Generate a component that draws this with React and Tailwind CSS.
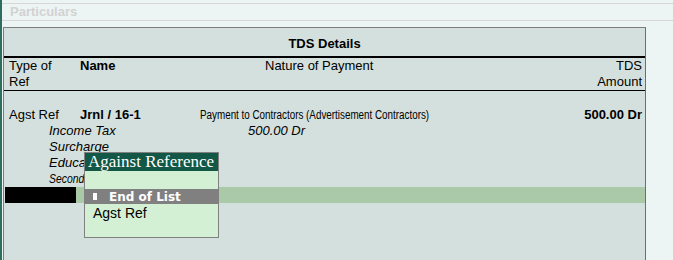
import React from "react";

const sans = "font-['Liberation_Sans',Arial,sans-serif]";

// condensed text: no narrow face installed, so squeeze Liberation Sans
const Narrow = ({ children, className = "text-[12px] scale-x-[0.82]" }) => (
    <span className={`inline-block origin-left whitespace-nowrap ${className}`}>{children}</span>
);

const TaxLine = ({ label, amount, narrow }) => (
    <div className="h-[16px] flex items-center pl-[45px] italic text-[13px] leading-[16px]">
        <div className="w-[199px] whitespace-nowrap">
            {narrow ? <Narrow className="text-[13px] scale-x-[0.8]">{label}</Narrow> : label}
        </div>
        {amount && <div>{amount}</div>}
    </div>
);

const Popup = () => (
    <div className="absolute left-[82px] top-[152px] w-[135px] h-[86px] border border-[#808080] bg-[#d4f0d4] flex flex-col">
        <div className="h-[18px] bg-[#135747] text-white text-[17px] leading-[18px] pl-[3px] font-['Liberation_Serif','Times_New_Roman',serif] whitespace-nowrap">
            Against Reference
        </div>
        <div className="h-[18px]"></div>
        <div className="h-[15px] bg-[#808080] flex items-center pl-[8px] gap-[12px] text-white font-bold text-[12px] font-['DejaVu_Sans',Verdana,sans-serif]">
            <span className="w-[4px] h-[7px] bg-white"></span>
            <span>End of List</span>
        </div>
        <div className={`h-[18px] pl-[8px] text-[14px] leading-[18px] ${sans}`}>Agst Ref</div>
    </div>
);

export default function App() {
    return (
        <div className={`relative w-[673px] h-[260px] overflow-hidden bg-[#edf5f4] border-l-2 border-[#2d6e5e] flex flex-col text-black ${sans}`}>
            <div className="h-[3px]"></div>
            <div className="h-[18px] border-y border-[#d6d6d6] pl-[8px] text-[13px] font-bold leading-[16px] text-[#d2d2d2]">
                Particulars
            </div>
            <div className="h-[6px]"></div>

            <div className="ml-[1px] w-[643px] flex-1 bg-[#d4e0dd] border-t border-l border-r border-[#7d7d7d] border-r-[#6e6e6e] flex flex-col">
                <div className="h-[28px] pt-[9px] text-center text-[13px] font-bold leading-[14px]">TDS Details</div>
                <div className="h-[2px] bg-black"></div>

                <div className="h-[33px] border-b border-black flex pl-[5px] pr-[3px] text-[13px] leading-[16px]">
                    <div className="w-[71px]">
                        <div>Type of</div>
                        <div>Ref</div>
                    </div>
                    <div className="w-[185px] font-bold">Name</div>
                    <div className="flex-1">Nature of Payment</div>
                    <div className="text-right">
                        <div>TDS</div>
                        <div>Amount</div>
                    </div>
                </div>

                <div className="h-[16px]"></div>
                <div className="h-[16px] flex items-center pl-[5px] pr-[3px] text-[13px] leading-[16px]">
                    <div className="w-[71px]">Agst Ref</div>
                    <div className="w-[120px] font-bold">Jrnl / 16-1</div>
                    <div className="flex-1"><Narrow>Payment to Contractors (Advertisement Contractors)</Narrow></div>
                    <div className="font-bold">500.00 Dr</div>
                </div>
                <TaxLine label="Income Tax" amount="500.00 Dr" />
                <TaxLine label="Surcharge" />
                <TaxLine label="Education Cess" />
                <TaxLine label="Secondary Education Cess" narrow />

                <div className="h-[16px] flex pl-[1px]">
                    <div className="w-[71px] bg-black"></div>
                    <div className="flex-1 bg-[#a9c9a9]"></div>
                </div>
            </div>

            <Popup />
        </div>
    );
}
